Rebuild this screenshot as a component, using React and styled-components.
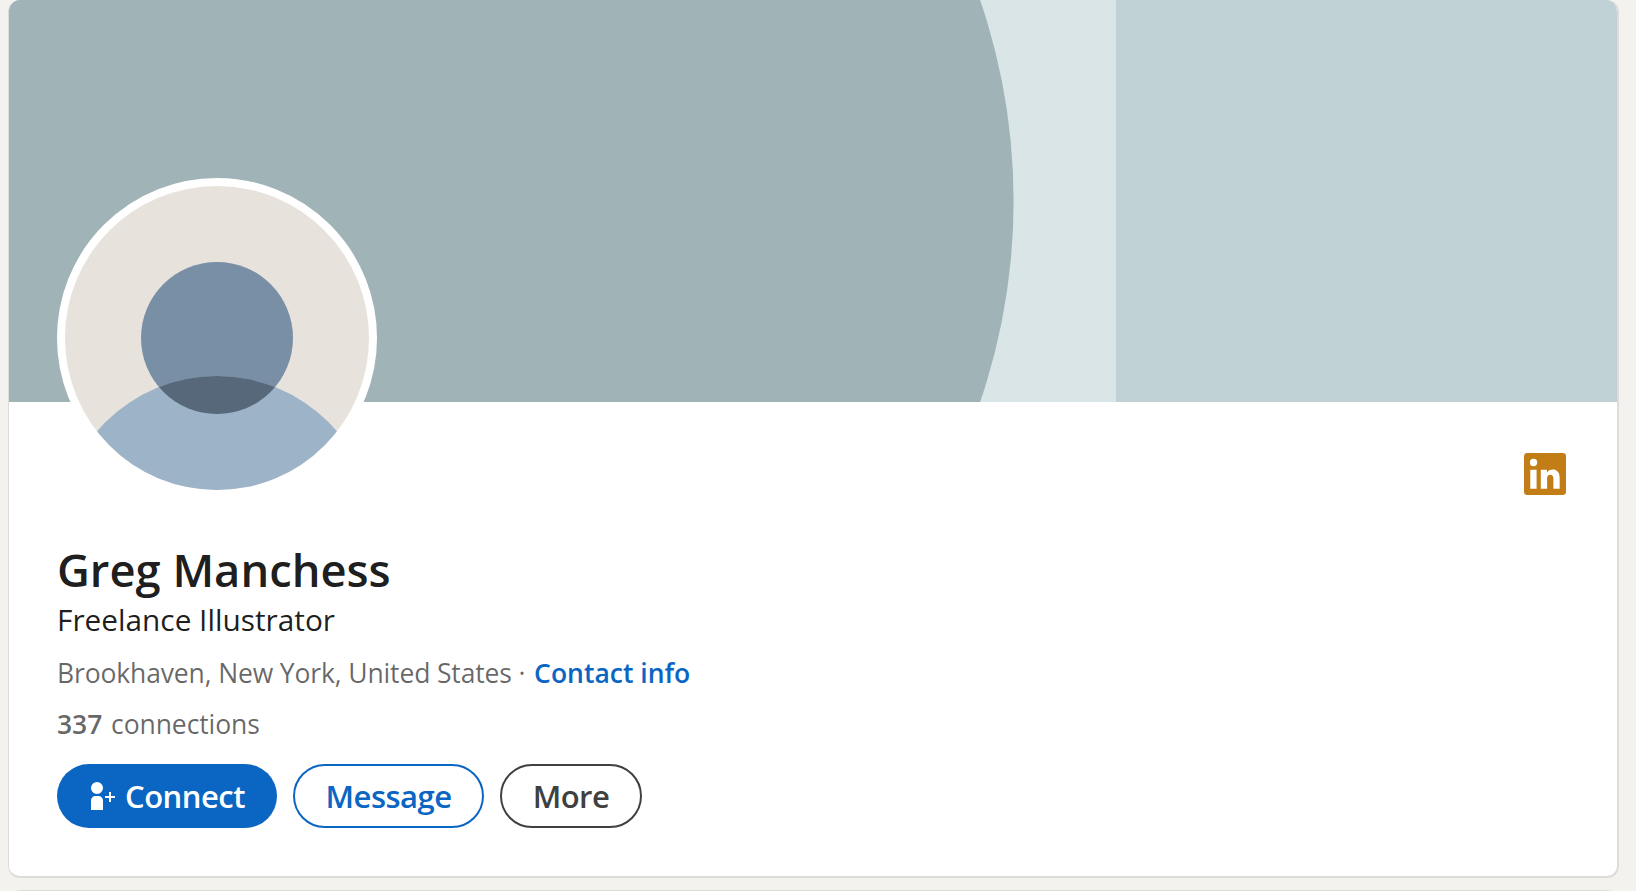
import React from "react"
import styled, { createGlobalStyle } from "styled-components"

const GlobalStyle = createGlobalStyle`
  html, body {
    margin: 0;
    height: 100%;
    overflow: hidden;
    background: #f4f2ee;
    font-family: "Open Sans", "Noto Sans", sans-serif;
  }
`

const App = () => (
  <Page>
    <GlobalStyle />
    <Card>
      <Banner viewBox="0 0 1608 402" preserveAspectRatio="none" aria-hidden="true">
        <rect width="1608" height="402" fill="#bfd1d5" />
        <rect width="1107" height="402" fill="#d9e5e7" />
        <circle cx="384.6" cy="201" r="620" fill="#a0b4b7" />
      </Banner>
      <Avatar>
        <svg viewBox="0 0 304 304" width="304" height="304" aria-hidden="true">
          <defs>
            <clipPath id="face">
              <circle cx="152" cy="152" r="152" />
            </clipPath>
            <clipPath id="head">
              <circle cx="152" cy="152" r="76" />
            </clipPath>
          </defs>
          <g clipPath="url(#face)">
            <rect width="304" height="304" fill="#e7e2dc" />
            <circle cx="152" cy="152" r="76" fill="#788fa5" />
            <circle cx="152" cy="348" r="158" fill="#9db3c8" />
            <circle cx="152" cy="348" r="158" fill="#56687a" clipPath="url(#head)" />
          </g>
        </svg>
      </Avatar>
      <Body>
        <LogoRow>
          <svg viewBox="2 2 20 20" width="42" height="42" fill="#c37d16" aria-hidden="true">
            <path d="M20.5 2h-17A1.5 1.5 0 002 3.5v17A1.5 1.5 0 003.5 22h17a1.5 1.5 0 001.5-1.5v-17A1.5 1.5 0 0020.5 2zM8 19H5v-9h3zM6.5 8.25A1.75 1.75 0 118.3 6.5a1.78 1.78 0 01-1.8 1.75zM19 19h-3v-4.74c0-1.42-.6-1.93-1.38-1.93A1.74 1.74 0 0013 14.19a.66.66 0 000 .14V19h-3v-9h2.9v1.3a3.11 3.11 0 012.7-1.4c1.55 0 3.36.86 3.36 3.66z" />
          </svg>
        </LogoRow>
        <Name>Greg Manchess</Name>
        <Headline>Freelance Illustrator</Headline>
        <Location>
          Brookhaven, New York, United States · <ContactLink href="#">Contact info</ContactLink>
        </Location>
        <Connections>
          <strong>337</strong> connections
        </Connections>
        <Actions>
          <PrimaryButton>
            <svg viewBox="0 0 16 16" width="32" height="32" fill="currentColor" aria-hidden="true">
              <path d="M9 4a3 3 0 11-3-3 3 3 0 013 3zM6.75 8h-1.5A2.25 2.25 0 003 10.25V15h6v-4.75A2.25 2.25 0 006.75 8zM13 8V6h-1v2h-2v1h2v2h1V9h2V8z" />
            </svg>
            Connect
          </PrimaryButton>
          <OutlineButton $color="#0a66c2">Message</OutlineButton>
          <OutlineButton $color="#404040">More</OutlineButton>
        </Actions>
      </Body>
    </Card>
    <NextCard />
  </Page>
)

const Page = styled.div`
  width: 1636px;
  height: 891px;
  padding-left: 8px;
  padding-right: 17px;
  box-sizing: border-box;
  overflow: hidden;
`

const Card = styled.section`
  position: relative;
  box-sizing: border-box;
  height: 878px;
  background: #fff;
  border: 1px solid #dddcd8;
  border-top: 0;
  border-right-width: 2px;
  border-bottom-width: 2px;
  border-radius: 12px;
  overflow: hidden;
`

const NextCard = styled.div`
  height: 40px;
  margin-top: 12px;
  background: #fff;
  border: 1px solid #dddcd8;
  border-radius: 12px;
`

const Banner = styled.svg`
  display: block;
  width: 100%;
  height: 402px;
`

const Avatar = styled.div`
  position: absolute;
  left: 48px;
  top: 178px;
  width: 304px;
  height: 304px;
  border: 8px solid #fff;
  border-radius: 50%;
  background: #fff;

  svg {
    display: block;
  }
`

const Body = styled.div`
  padding: 51px 51px 46px 48px;
`

const LogoRow = styled.div`
  display: flex;
  justify-content: flex-end;
  height: 42px;
`

const Name = styled.h1`
  margin: 47px 0 0;
  font-size: 45.3px;
  font-weight: 600;
  line-height: 56px;
  color: rgba(0, 0, 0, 0.9);
`

const Headline = styled.div`
  margin-top: 2px;
  font-size: 29.8px;
  line-height: 40px;
  color: rgba(0, 0, 0, 0.9);
`

const Location = styled.div`
  margin-top: 13px;
  font-size: 26.5px;
  line-height: 40px;
  letter-spacing: -0.14px;
  color: rgba(0, 0, 0, 0.6);
`

const Connections = styled(Location)`
  margin-top: 11px;
  letter-spacing: -0.08px;

  strong {
    margin-right: 2px;
    font-weight: 600;
  }
`

const ContactLink = styled.a`
  margin-left: 2px;
  font-weight: 600;
  letter-spacing: 0;
  color: #0a66c2;
  text-decoration: none;
`

const Actions = styled.div`
  display: flex;
  gap: 16px;
  margin-top: 20px;
`

const PrimaryButton = styled.button`
  display: flex;
  align-items: center;
  gap: 8px;
  box-sizing: border-box;
  height: 64px;
  padding: 0 32px 0 28px;
  border: 0;
  border-radius: 32px;
  background: #0a66c2;
  color: #fff;
  font: 600 31px "Open Sans", "Noto Sans", sans-serif;
  letter-spacing: -0.5px;
`

const OutlineButton = styled.button`
  box-sizing: border-box;
  height: 64px;
  padding: 0 30.5px;
  border: 2px solid ${(p) => p.$color};
  border-radius: 32px;
  background: #fff;
  color: ${(p) => p.$color};
  font: 600 31px "Open Sans", "Noto Sans", sans-serif;
  letter-spacing: -0.5px;
`

export default App
